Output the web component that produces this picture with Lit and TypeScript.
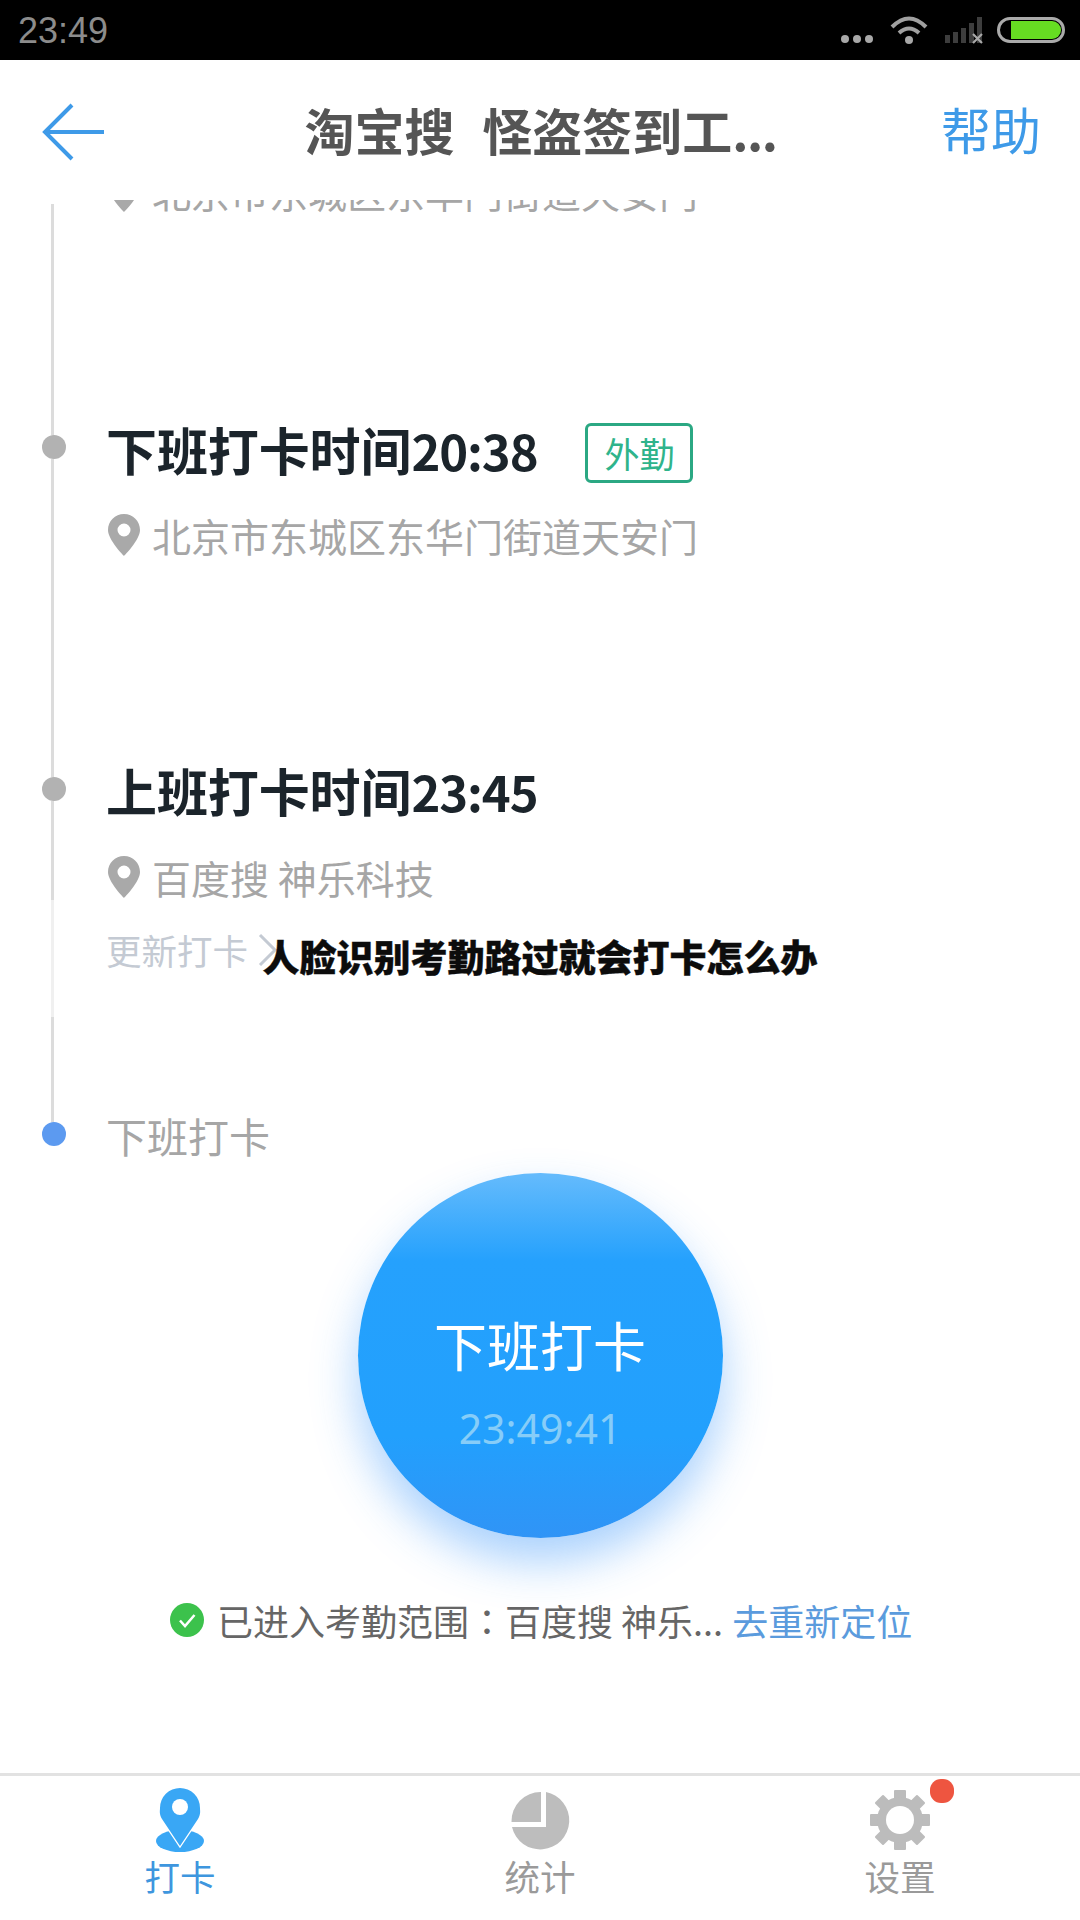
import { LitElement, html, css, svg } from "lit";
import { customElement } from "lit/decorators.js";

const locPin = svg`<svg class="pin" viewBox="0 0 32 42"><path fill="#a9a9a9" fill-rule="evenodd" d="M16 0C7 0 0 7 0 16c0 10 16 26 16 26s16-16 16-26C32 7 25 0 16 0zm0 9.500a6.500 6.500 0 1 1 0 13 6.500 6.500 0 0 1 0-13z"/></svg>`;

@customElement("app-root")
export class AppRoot extends LitElement {
  static styles = css`
    :host {
      display: block;
      width: 1080px;
      height: 1920px;
      background: #fff;
      font-family: "Noto Sans CJK SC", "Noto Sans", sans-serif;
    }
    .page { position: relative; display: flex; flex-direction: column; width: 1080px; height: 1920px; overflow: hidden; }

    .status { flex: 0 0 60px; min-height: 0; background: #000; display: flex; align-items: center; justify-content: space-between; padding: 0 15px 0 18px; box-sizing: border-box; }
    .clock { font-family: "Liberation Sans", sans-serif; font-size: 36px; color: #8c8c8c; line-height: 58px; padding-top: 2px; }
    .status-icons { display: block; width: 224px; height: 60px; }

    .header { flex: 0 0 140px; min-height: 0; display: grid; grid-template-columns: 1fr auto 1fr; align-items: center; padding: 0 40px 0 42px; box-sizing: border-box; }
    .back { display: block; width: 64px; height: 66px; margin-top: 4px; }
    .title { font-size: 50px; font-weight: 700; color: #555; line-height: 70px; white-space: pre; word-spacing: 2.500px; margin: -3px 0 0 -1px; }
    .title i { font-style: normal; letter-spacing: -1.500px; }
    .help { justify-self: end; font-size: 50px; color: #3e9ae8; line-height: 70px; margin: -4px -1px 0 0; }

    .main { flex: 1 1 auto; min-height: 0; overflow: hidden; display: flex; flex-direction: column; }
    .item { display: flex; flex: none; }
    .rail { flex: 0 0 108px; display: flex; flex-direction: column; }
    .seg { width: 3px; margin-left: 51px; background: #dcdcdc; }
    .seg.grow { flex: 1 1 auto; }
    .seg.faint { background: #f0f0f0; }
    .dot { width: 24px; height: 24px; border-radius: 50%; margin-left: 42px; background: #b2b2b2; flex: none; }
    .dot.now { background: #5c9af0; }
    .body { flex: 1 1 auto; min-width: 0; }
    .i0 { height: 217px; }
    .i0 .rail { padding-top: 4px; }
    .i0 .loc { margin-top: -34px; }
    .i1 { height: 341px; }
    .i2 { height: 354px; }
    .i3 { height: 60px; }
    .head { display: flex; align-items: center; height: 70px; margin-top: -3px; }
    .when { font-size: 51px; font-weight: 700; color: #1b242b; line-height: 70px; margin-left: -2px; letter-spacing: -0.1px; }
    .when b { font-size: 49px; letter-spacing: -1.100px; font-weight: 700; }
    .tag { margin-left: 48px; width: 108px; height: 60px; box-sizing: border-box; border: 3px solid #2ba883; border-radius: 6px; font-size: 35px; color: #2fb48b; display: flex; align-items: center; justify-content: center; margin-top: 7px; }
    .loc { display: flex; align-items: center; height: 50px; margin-top: 26px; }
    .i2 .loc { margin-top: 27px; }
    .pin { width: 32px; height: 42px; flex: none; margin-right: 12px; }
    .loc span { font-size: 39px; color: #a6a6a6; line-height: 50px; white-space: pre; }
    .update { display: flex; align-items: center; height: 50px; margin-left: -2px; margin-top: 23px; font-size: 35.500px; color: #c4cad3; line-height: 50px; }
    .chev { width: 20px; height: 34px; margin-left: 10px; flex: none; }
    .next { font-size: 41px; color: #a6a6a6; line-height: 50px; margin: -2px 0 0 -2px; }

    .punch-wrap { display: flex; justify-content: center; margin-top: 1px; position: relative; flex: none; }
    .punch { width: 365px; height: 365px; border-radius: 50%; background: linear-gradient(180deg, #65bbfc 0%, #25a1fd 24%, #22a0fd 72%, #3094f6 100%); box-shadow: 0 24px 46px rgba(50, 145, 250, 0.42); display: flex; flex-direction: column; align-items: center; color: #fff; }
    .punch-label { font-size: 53px; line-height: 70px; margin-top: 136px; }
    .punch-time { font-family: "Noto Sans", sans-serif; font-size: 41px; line-height: 60px; color: #87cdf8; margin-top: 19px; }

    .range { display: flex; align-items: center; height: 50px; flex: none; margin-top: 57px; padding-left: 170px; font-size: 36px; color: #666; white-space: pre; }
    .ok { width: 34px; height: 34px; flex: none; margin-right: 13px; }
    .range em { font-style: normal; font-family: "Noto Sans CJK TC", sans-serif; }
    .range a { color: #5b9bdd; margin-left: 9px; }

    .tabs { flex: 0 0 147px; box-sizing: border-box; border-top: 3px solid #e2e2e2; display: grid; grid-template-columns: repeat(3, 360px); }
    .tab { display: flex; flex-direction: column; align-items: center; font-size: 35.500px; line-height: 44px; color: #9a9a9a; position: relative; }
    .tab.on { color: #3e96de; }
    .tab-icon { display: block; width: 70px; height: 66px; margin-top: 11px; flex: none; }
    .tab-label { margin-top: 1px; }
    .badge { position: absolute; left: 210px; top: 3px; width: 24px; height: 24px; border-radius: 11px; background: #ee5540; }

    .caption { position: absolute; left: 0; right: 0; top: 930px; text-align: center; font-size: 37px; font-weight: 900; color: #0c0c0c; line-height: 52px; white-space: nowrap; -webkit-text-stroke: 0.4px #0c0c0c; }
  `;

  render() {
    return html`
      <div class="page">
        <div class="status">
          <span class="clock">23:49</span>
          <svg class="status-icons" viewBox="0 0 224 60">
            <g fill="#a8a8a8"><circle cx="4" cy="39" r="4"/><circle cx="16" cy="39" r="4"/><circle cx="28" cy="39" r="4"/></g>
            <g fill="none" stroke="#a0a0a0" stroke-width="4">
              <path d="M51 27q17-17 34 0"/><path d="M58 33q10-9 20 0"/>
            </g>
            <circle cx="68" cy="40" r="4" fill="#a8a8a8"/>
            <g fill="#3d3d3d"><rect x="104" y="35" width="5" height="8"/><rect x="112" y="32" width="5" height="11"/><rect x="120" y="28" width="5" height="15"/><rect x="128" y="23" width="5" height="20"/><rect x="136" y="17" width="5" height="26"/></g>
            <path d="M132 34l9 9m0-9l-9 9" stroke="#a8a8a8" stroke-width="2.200" fill="none"/>
            <rect x="157.500" y="18.500" width="65" height="23" rx="11.500" fill="#000" stroke="#aaa" stroke-width="3"/>
            <path d="M170 21h41a9 9 0 0 1 0 18h-41z" fill="#66dd22"/>
          </svg>
        </div>

        <div class="header">
          <svg class="back" viewBox="0 0 64 66"><path d="M30 6L3 33l27 27M3 33h59" fill="none" stroke="#3e9ae8" stroke-width="4"/></svg>
          <div class="title">淘宝搜  怪盗签到工<i>...</i></div>
          <div class="help">帮助</div>
        </div>

        <div class="main">
          <div class="item i0">
            <div class="rail"><div class="seg grow"></div></div>
            <div class="body"><div class="loc">${locPin}<span>北京市东城区东华门街道天安门</span></div></div>
          </div>

          <div class="item i1">
            <div class="rail"><div class="seg" style="height:18px"></div><div class="dot"></div><div class="seg grow"></div></div>
            <div class="body">
              <div class="head"><span class="when">下班打卡时间<b>20:38</b></span><span class="tag">外勤</span></div>
              <div class="loc">${locPin}<span>北京市东城区东华门街道天安门</span></div>
            </div>
          </div>

          <div class="item i2">
            <div class="rail">
              <div class="seg" style="height:19px"></div><div class="dot"></div>
              <div class="seg" style="height:99px"></div>
              <div class="seg faint" style="height:117px"></div>
              <div class="seg grow"></div>
            </div>
            <div class="body">
              <div class="head"><span class="when">上班打卡时间<b>23:45</b></span></div>
              <div class="loc">${locPin}<span>百度搜 神乐科技</span></div>
              <div class="update">更新打卡<svg class="chev" viewBox="0 0 20 34"><path d="M2 2l15 15L2 32" fill="none" stroke="#c4cad3" stroke-width="3"/></svg></div>
            </div>
          </div>

          <div class="item i3">
            <div class="rail"><div class="seg" style="height:10px"></div><div class="dot now"></div></div>
            <div class="body"><div class="next">下班打卡</div></div>
          </div>

          <div class="punch-wrap">
            <div class="punch">
              <div class="punch-label">下班打卡</div>
              <div class="punch-time">23:49:41</div>
            </div>
          </div>

          <div class="range">
            <svg class="ok" viewBox="0 0 34 34"><circle cx="17" cy="17" r="17" fill="#3cc24c"/><path d="M10 17.500l5 5.500 9.500-11" fill="none" stroke="#fff" stroke-width="2.500"/></svg>
            <span>已进入考勤范围<em>：</em>百度搜 神乐...</span><a>去重新定位</a>
          </div>
        </div>

        <div class="tabs">
          <div class="tab on">
            <svg class="tab-icon" viewBox="0 0 70 66">
              <ellipse cx="35" cy="54" rx="24" ry="11" fill="#39a7f5"/>
              <path d="M35 59L17 32C14 27 15 24 15 21a20 20 0 0 1 40 0c0 3 1 6-2 11z" fill="#39a7f5" stroke="#fff" stroke-width="2.500" paint-order="stroke"/>
              <circle cx="35" cy="20" r="8" fill="#fff"/>
            </svg>
            <span class="tab-label">打卡</span>
          </div>
          <div class="tab">
            <svg class="tab-icon" viewBox="0 0 70 66">
              <path d="M36 5V35H6.500A29 29 0 0 1 36 5z" fill="#bdbdbd"/>
              <path d="M41 5A29 29 0 1 1 7 40H41z" fill="#bdbdbd"/>
            </svg>
            <span class="tab-label">统计</span>
          </div>
          <div class="tab">
            <svg class="tab-icon" viewBox="0 0 70 66">
              <g fill="#bcbcbc" transform="translate(35 33)">
                <rect x="-6" y="-30" width="12" height="60" rx="1"/>
                <rect x="-6" y="-30" width="12" height="60" rx="1" transform="rotate(45)"/>
                <rect x="-6" y="-30" width="12" height="60" rx="1" transform="rotate(90)"/>
                <rect x="-6" y="-30" width="12" height="60" rx="1" transform="rotate(135)"/>
                <circle r="23"/>
              </g>
              <circle cx="35" cy="33" r="14" fill="#fff"/>
            </svg>
            <span class="tab-label">设置</span>
            <span class="badge"></span>
          </div>
        </div>

        <div class="caption">人脸识别考勤路过就会打卡怎么办</div>
      </div>
    `;
  }
}
